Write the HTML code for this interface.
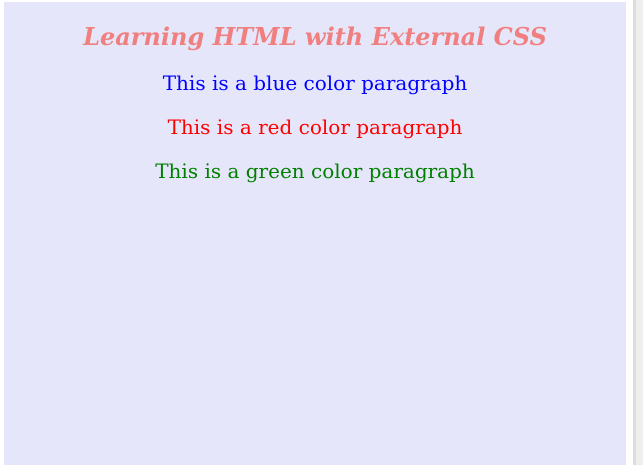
<!DOCTYPE html>
<html><head><style>
html,body{margin:0;padding:0;width:643px;height:465px;overflow:hidden;background:#fff;}
.side{position:absolute;left:633px;top:0;width:10px;height:465px;background:#eeeeee;border-left:3px solid #ddd;box-sizing:border-box;}
.panel{position:absolute;left:4px;top:2px;width:622px;height:463px;background:#e6e6fa;font-family:"DejaVu Serif",serif;text-align:center;}
h1{position:absolute;left:0;right:0;top:20px;margin:0;font-size:24px;font-style:italic;font-weight:bold;color:#f08080;line-height:30px;}
p{position:absolute;left:0;right:0;margin:0;font-size:20px;line-height:24px;}
</style></head><body>
<div class="side"></div>
<div class="panel">
<h1>Learning HTML with External CSS</h1>
<p style="top:69px;color:#0000ff">This is a blue color paragraph</p>
<p style="top:113px;color:#ff0000">This is a red color paragraph</p>
<p style="top:157px;color:#008000">This is a green color paragraph</p>
</div>
</body></html>
